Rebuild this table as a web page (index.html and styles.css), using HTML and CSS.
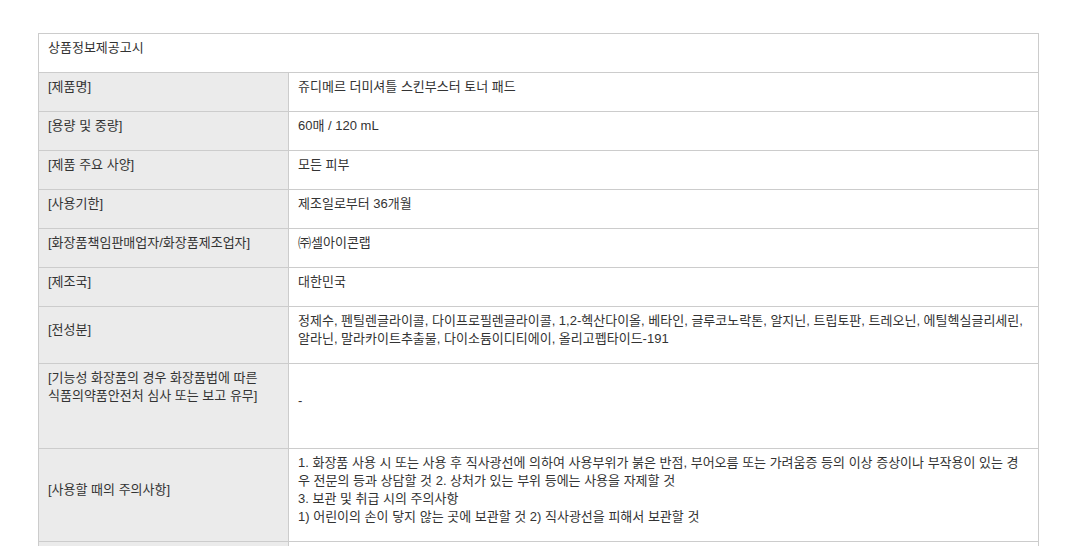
FILE: index.html
```html
<!DOCTYPE html>
<html lang="ko">
<head>
<meta charset="utf-8">
<title>상품정보제공고시</title>
<link rel="stylesheet" href="styles.css">
</head>
<body>
<div class="page">
<table class="notice">
  <colgroup><col class="col-label"><col class="col-value"></colgroup>
  <tr><th class="notice-title" colspan="2">상품정보제공고시</th></tr>
  <tr><th class="label">[제품명]</th><td class="value">쥬디메르 더미셔틀 스킨부스터 토너 패드</td></tr>
  <tr><th class="label">[용량 및 중량]</th><td class="value">60매 / 120 mL</td></tr>
  <tr><th class="label">[제품 주요 사양]</th><td class="value">모든 피부</td></tr>
  <tr><th class="label">[사용기한]</th><td class="value">제조일로부터 36개월</td></tr>
  <tr><th class="label">[화장품책임판매업자/화장품제조업자]</th><td class="value">㈜셀아이콘랩</td></tr>
  <tr><th class="label">[제조국]</th><td class="value">대한민국</td></tr>
  <tr><th class="label">[전성분]</th><td class="value">정제수, 펜틸렌글라이콜, 다이프로필렌글라이콜, 1,2-헥산다이올, 베타인, 글루코노락톤, 알지닌, 트립토판, 트레오닌, 에틸헥실글리세린, 알라닌, 말라카이트추출물, 다이소듐이디티에이, 올리고펩타이드-191</td></tr>
  <tr><th class="label label-top">[기능성 화장품의 경우 화장품법에 따른<br>식품의약품안전처 심사 또는 보고 유무]</th><td class="value">-</td></tr>
  <tr><th class="label">[사용할 때의 주의사항]</th><td class="value">1. 화장품 사용 시 또는 사용 후 직사광선에 의하여 사용부위가 붉은 반점, 부어오름 또는 가려움증 등의 이상 증상이나 부작용이 있는 경우 전문의 등과 상담할 것 2. 상처가 있는 부위 등에는 사용을 자제할 것<br>3. 보관 및 취급 시의 주의사항<br>1) 어린이의 손이 닿지 않는 곳에 보관할 것 2) 직사광선을 피해서 보관할 것</td></tr>
  <tr class="row-empty"><th class="label"></th><td class="value"></td></tr>
</table>
</div>
</body>
</html>
```

FILE: styles.css
```css
html, body {
  margin: 0;
  padding: 0;
  background: #ffffff;
}
.page {
  padding: 33px 0 0 38px;
}
.notice {
  width: 1001px;
  border-collapse: collapse;
  table-layout: fixed;
  font-family: "Liberation Sans", "Noto Sans CJK KR", sans-serif;
  font-size: 13px;
  line-height: 18px;
  color: #333333;
}
.col-label {
  width: 250px;
}
.notice th,
.notice td {
  border: 1px solid #cccccc;
  padding: 5px 10px 15px 9px;
  text-align: left;
  font-weight: normal;
  vertical-align: middle;
}
.notice .notice-title {
  background: #ffffff;
}
.notice .label {
  background: #ebebeb;
}
.notice .label-top {
  vertical-align: top;
  padding-bottom: 43px;
}
.notice .value {
  background: #ffffff;
}
.row-empty {
  height: 39px;
}
```
